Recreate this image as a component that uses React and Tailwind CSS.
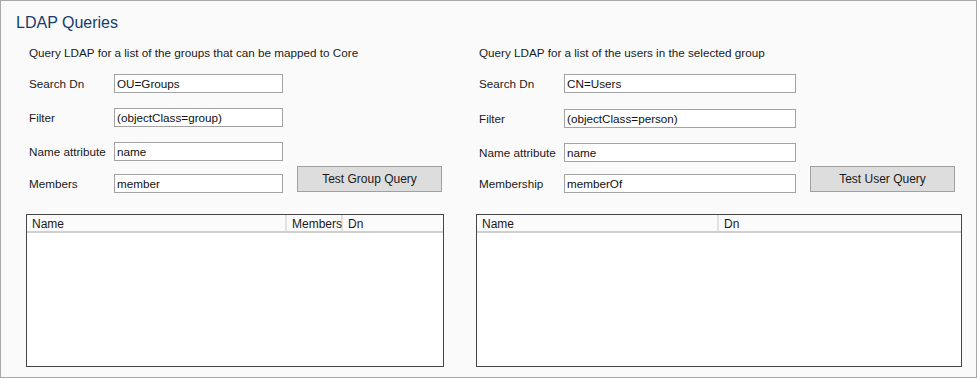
import React from "react";

const font = { fontFamily: '"Liberation Sans", Arial, sans-serif' };

function Field({ label, value, inputW, top }) {
  return (
    <div className={`flex items-center h-[19px] ${top}`}>
      <span className="w-[88px] pl-[3px] text-[11.7px] leading-[15px] text-[#1a1a1a]">{label}</span>
      <div
        className={`${inputW} h-[19px] border border-[#a3a3a3] bg-white pl-[2px] text-[11.7px] leading-[17px] text-[#111]`}
      >
        {value}
      </div>
    </div>
  );
}

function Button({ children }) {
  return (
    <div className="w-[145px] h-[26px] border border-[#a0a0a0] bg-[#dddddd] flex items-center justify-center text-[12px] text-[#1a1a1a] mb-[1px]">
      {children}
    </div>
  );
}

function Table({ cols, w }) {
  return (
    <div className={`${w} h-[153px] border border-[#454545] bg-white mt-[21px]`}>
      <div className="flex h-[18px] bg-[#fbfbfb] border-b-2 border-[#cfcfcf]">
        {cols.map((c, i) => (
          <div
            key={c.name}
            className={`${c.w} ${i < cols.length - 1 ? "border-r-2 border-[#e2e2e2]" : ""} pl-[5px] pt-[2px] text-[12px] leading-[15px] text-[#1a1a1a]`}
          >
            {c.name}
          </div>
        ))}
      </div>
    </div>
  );
}

export default function App() {
  return (
    <div className="w-[977px] h-[378px] border border-[#a9a9a9] bg-[#fafafa]" style={font}>
      <h1 className="pl-[15px] pt-[12px] text-[16px] leading-[20px] text-[#173c6c]">LDAP Queries</h1>
      <div className="flex mt-[12px]">
        <section className="w-[449px] pl-[25px]">
          <p className="pl-[3px] text-[11.7px] leading-[15px] text-[#1a1a1a]">
            Query LDAP for a list of the groups that can be mapped to Core
          </p>
          <Field label="Search Dn" value="OU=Groups" inputW="w-[169px]" top="mt-[14px]" />
          <Field label="Filter" value="(objectClass=group)" inputW="w-[169px]" top="mt-[15px]" />
          <Field label="Name attribute" value="name" inputW="w-[169px]" top="mt-[15px]" />
          <div className="flex items-end gap-[14px]">
            <Field label="Members" value="member" inputW="w-[169px]" top="mt-[13px]" />
            <Button>Test Group Query</Button>
          </div>
          <Table
            w="w-[418px]"
            cols={[
              { name: "Name", w: "w-[260px]" },
              { name: "Members", w: "w-[56px]" },
              { name: "Dn", w: "flex-1" },
            ]}
          />
        </section>
        <section className="pl-[26px]">
          <p className="pl-[3px] text-[11.7px] leading-[15px] text-[#1a1a1a]">
            Query LDAP for a list of the users in the selected group
          </p>
          <Field label="Search Dn" value="CN=Users" inputW="w-[232px]" top="mt-[14px]" />
          <Field label="Filter" value="(objectClass=person)" inputW="w-[232px]" top="mt-[16px]" />
          <Field label="Name attribute" value="name" inputW="w-[232px]" top="mt-[15px]" />
          <div className="flex items-end gap-[14px]">
            <Field label="Membership" value="memberOf" inputW="w-[232px]" top="mt-[12px]" />
            <Button>Test User Query</Button>
          </div>
          <Table
            w="w-[486px]"
            cols={[
              { name: "Name", w: "w-[242px]" },
              { name: "Dn", w: "flex-1" },
            ]}
          />
        </section>
      </div>
    </div>
  );
}
